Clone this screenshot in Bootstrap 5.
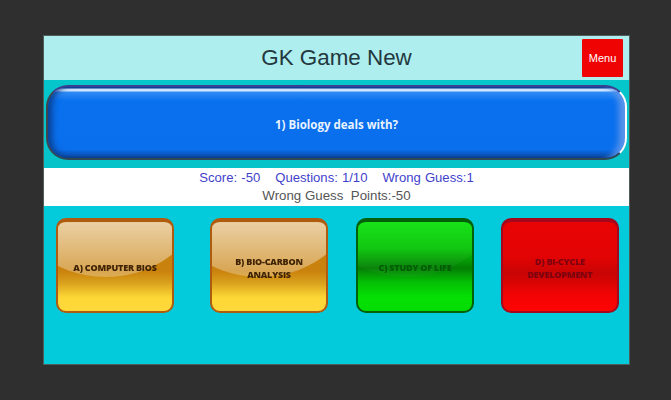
<!DOCTYPE html>
<html lang="en">
<head>
<meta charset="utf-8">
<title>GK Game New</title>
<link rel="stylesheet" href="https://cdn.jsdelivr.net/npm/bootstrap@5.3.0/dist/css/bootstrap.min.css">
<style>
html,body{height:400px;overflow:hidden}
body{background:#2f2f2f;font-family:"Liberation Sans",Arial,sans-serif}
.stage{padding:36px 42px 36px 44px;height:400px}
.frame{height:328px;background:#04cbdc;filter:blur(.5px);box-shadow:0 0 0 1px rgba(120,150,150,.45)}
.head-bar{height:44px;background:#aeeeee;position:relative}
.head-title{font-size:22.4px;color:#23383f;line-height:44px}
.menu-btn{position:absolute;left:538px;top:3px;width:41px;height:38px;padding:0;background:#f00303;border:0;border-radius:1px;color:#fff;font-size:11px;--bs-btn-hover-bg:#f00303;--bs-btn-hover-color:#fff}
.q-band{height:88px;padding:5px 2px 8px;background:linear-gradient(#05c6cb,#06c3c9)}
.q-btn{height:75px;padding-top:3px;border-radius:22px;border:2px solid #fff;border-left-color:#3c4450;border-top-color:#3b3f8f;border-bottom-color:#2f4a55;
 background:linear-gradient(#0a3f9c 0,#0a3f9c 1px,#d5e8ff 2px,#d5e8ff 4px,#2f8cf5 5px,#0970ee 14px,#0a6fec 88%,#0a4fb0 97%,#0b3a80 100%);
 color:#e9f3ff;font:700 11.5px "Open Sans",sans-serif;position:relative;box-shadow:inset 7px 0 6px -3px #0a3f90,inset -12px 0 6px -6px #5c95ea}
.stats{height:38px;background:#fff;font-size:13.1px;line-height:18px;padding-top:1px}
.stats-main{color:#3f3fcc;word-spacing:.5px}
.stats-main span+span{margin-left:15px}
.stats-sub{color:#555;font-size:13.3px}
.answers{padding:12px 0 0 12px}
.ans{width:118px;height:95px;padding:2px 4px 0;border-radius:10px;border:2px solid;border-top-width:4px;position:relative;overflow:hidden;font:800 9px/13px "Open Sans",sans-serif;letter-spacing:-.2px;text-transform:uppercase}
.ans::before{content:"";position:absolute;left:-52px;top:-125px;width:200px;height:180px;border-radius:50%;background:linear-gradient(transparent 66%,rgba(255,255,255,.62) 70%,rgba(255,255,255,.25) 100%)}
.ans>span{position:relative}
.ans-gold{border-color:#b05c10;background:linear-gradient(#c9820e 0,#c9820e 55%,#d9a01c 68%,#fdd835 85%,#ffd83a 100%);color:#3f2304}
.ans-green{border-color:#04600a;background:linear-gradient(#06e106 0,#05c305 30%,#047f04 52%,#05c005 68%,#05e005 85%,#04dd04 100%);color:#035c05}
.ans-green::before{opacity:.12}
.ans-red{border-color:#a5071c;background:linear-gradient(#e90404 0,#e20404 40%,#c80404 58%,#ef0404 80%,#ff0404 100%);color:#7c0410}
.ans-red::before{display:none}
.gap-b{margin-left:36px}
.gap-c{margin-left:28px}
.gap-d{margin-left:27px}
</style>
</head>
<body>
<div class="stage">
  <div class="frame">
    <div class="head-bar text-center">
      <div class="head-title">GK Game New</div>
      <button type="button" class="btn menu-btn">Menu</button>
    </div>
    <div class="q-band">
      <div class="q-btn d-flex align-items-center justify-content-center">1) Biology deals with?</div>
    </div>
    <div class="stats text-center">
      <div class="stats-main"><span>Score: -50</span><span>Questions: 1/10</span><span>Wrong Guess:1</span></div>
      <div class="stats-sub">Wrong Guess&nbsp; Points:-50</div>
    </div>
    <div class="answers d-flex">
      <div class="ans ans-gold d-flex align-items-center justify-content-center text-center"><span>A) Computer Bios</span></div>
      <div class="ans ans-gold gap-b d-flex align-items-center justify-content-center text-center"><span>B) Bio-Carbon Analysis</span></div>
      <div class="ans ans-green gap-c d-flex align-items-center justify-content-center text-center"><span>C) Study of Life</span></div>
      <div class="ans ans-red gap-d d-flex align-items-center justify-content-center text-center"><span>D) Bi-Cycle Development</span></div>
    </div>
  </div>
</div>
<script src="https://cdn.jsdelivr.net/npm/bootstrap@5.3.0/dist/js/bootstrap.bundle.min.js"></script>
</body>
</html>
